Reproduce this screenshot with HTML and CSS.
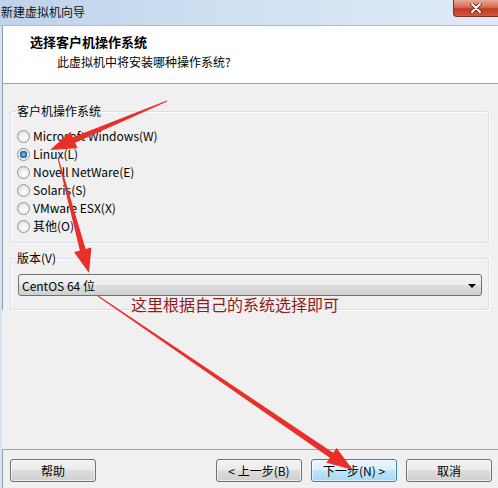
FILE: index.html
```html
<!DOCTYPE html>
<html lang="zh-CN">
<head>
<meta charset="utf-8">
<title>新建虚拟机向导</title>
<link rel="stylesheet" href="styles.css">
</head>
<body>
<div class="window">
  <div class="titlebar">
    <span class="title">新建虚拟机向导</span>
    <span class="close"><svg width="14" height="10" viewBox="0 0 14 10"><path d="M3 1 L11 9 M11 1 L3 9" stroke="#5a1a10" stroke-width="3.4" stroke-linecap="round"/><path d="M3 1 L11 9 M11 1 L3 9" stroke="#ffffff" stroke-width="2" stroke-linecap="round"/></svg></span>
  </div>
  <div class="frame">
    <div class="header">
      <div class="h1">选择客户机操作系统</div>
      <div class="sub">此虚拟机中将安装哪种操作系统?</div>
    </div>
    <div class="content">
      <fieldset class="group g1">
        <legend>客户机操作系统</legend>
        <div class="opt"><span class="radio"></span>Microsoft Windows(W)</div>
        <div class="opt"><span class="radio on"></span>Linux(L)</div>
        <div class="opt"><span class="radio"></span>Novell NetWare(E)</div>
        <div class="opt"><span class="radio"></span>Solaris(S)</div>
        <div class="opt"><span class="radio"></span>VMware ESX(X)</div>
        <div class="opt"><span class="radio"></span>其他(O)</div>
      </fieldset>
      <fieldset class="group g2">
        <legend>版本(V)</legend>
        <div class="combo"><span>CentOS 64 位</span><span class="caret"></span></div>
      </fieldset>
    </div>
    <div class="footer">
      <button class="btn">帮助</button>
      <span class="spacer"></span>
      <button class="btn">&lt; 上一步(B)</button>
      <button class="btn default">下一步(N) &gt;</button>
      <button class="btn">取消</button>
    </div>
  </div>
  <div class="note">这里根据自己的系统选择即可</div>
  <svg class="arrows" width="498" height="488" viewBox="0 0 498 488">
    <polygon points="166.8,100.5 72.8,137.2 70.5,131.7 50,150 77.5,148.3 75.2,142.8 167.2,101.5"/>
    <polygon points="57.5,158.1 79.85,250.61 74.06,252.17 89,273 91.44,247.49 85.65,249.05 58.5,157.9"/>
    <polygon points="97.72,296.41 329.83,457.82 326.45,462.77 353,470 336.59,447.91 333.21,452.86 98.28,295.59"/>
  </svg>
</div>
</body>
</html>
```

FILE: styles.css
```css
* { box-sizing: border-box; }
html, body { margin: 0; padding: 0; }
body {
  width: 498px;
  height: 488px;
  overflow: hidden;
  font-family: "Noto Sans CJK SC", "Microsoft YaHei", sans-serif;
  font-size: 12px;
  color: #000;
}
.window {
  position: relative;
  width: 498px;
  height: 488px;
  display: flex;
  flex-direction: column;
  background: #f0f0f0;
}
.titlebar {
  height: 26px;
  flex: none;
  display: flex;
  align-items: flex-start;
  border-bottom: 1px solid #a8bdd4;
  background: linear-gradient(to right, #bdd3eb 0%, #cfe0f2 45%, #dfeaf6 100%);
}
.title {
  padding: 4px 0 0 1px;
  line-height: 16px;
  color: #111;
}
.close {
  margin-left: auto;
  width: 45px;
  height: 17px;
  display: flex;
  align-items: center;
  justify-content: center;
  border: 1px solid #7c2e22;
  border-top: none;
  border-right: none;
  border-radius: 0 0 0 4px;
  background: linear-gradient(#e9a898 0%, #d86a52 45%, #c13c22 55%, #d0583c 100%);
}
.frame {
  flex: 1;
  display: flex;
  flex-direction: column;
  border-left: 2px solid #d6e3f1;
}
.frame > * { border-left: 1px solid #8b9db4; }
.header {
  height: 58px;
  flex: none;
  background: #fff;
  border-bottom: 1px solid #a0a0a0;
  padding: 7px 0 0 27px;
}
.h1 {
  font-size: 13px;
  font-weight: bold;
  line-height: 18px;
}
.sub {
  margin-top: 3px;
  padding-left: 27px;
  line-height: 16px;
}
.content {
  padding: 0 9px 0 7px;
}
.group {
  margin: 0;
  border: 1px solid #d5dfe5;
  box-shadow: inset 1px 1px 0 #fff, 1px 1px 0 #fff;
  border-radius: 2px;
  min-width: 0;
}
.group legend {
  margin-left: -2px;
  padding: 0 1px;
  line-height: 16px;
}
.g1 {
  margin-top: 19px;
  padding: 8px 6px 7px 7px;
}
.g2 {
  margin-top: 7px;
  padding: 8px 6px 13px 7px;
}
.opt {
  display: flex;
  align-items: center;
  height: 18px;
  line-height: 18px;
}
.radio {
  width: 13px;
  height: 13px;
  margin: 0 3px 0 -1px;
  border-radius: 50%;
  border: 1px solid #939393;
  background: radial-gradient(circle at 60% 65%, #ffffff 0%, #f0f0f0 40%, #d6d6d6 100%);
  flex: none;
}
.radio.on {
  background:
    radial-gradient(circle at 50% 50%, #8fd1f5 0px, #2c8fcf 2px, #185e93 3.5px, transparent 4px),
    radial-gradient(circle at 60% 65%, #ffffff 0%, #f0f0f0 40%, #d6d6d6 100%);
}
.combo {
  height: 22px;
  display: flex;
  align-items: center;
  justify-content: space-between;
  padding: 0 5px 0 3px;
  border: 1px solid #707070;
  border-radius: 3px;
  background: linear-gradient(#f3f3f3 0%, #ececec 50%, #dedede 50%, #d0d0d0 100%);
}
.caret {
  width: 0;
  height: 0;
  border-left: 4px solid transparent;
  border-right: 4px solid transparent;
  border-top: 4px solid #000;
  margin-top: 1px;
}
.footer {
  margin-top: auto;
  height: 39px;
  flex: none;
  display: flex;
  align-items: flex-start;
  gap: 9px;
  padding: 9px 6px 0 7px;
  border-top: 1px solid #a0a0a0;
}
.spacer { flex: 1; }
.btn {
  width: 86px;
  height: 23px;
  padding: 0;
  font-family: inherit;
  font-size: 12px;
  color: #000;
  border: 1px solid #707070;
  border-radius: 3px;
  background: linear-gradient(#f2f2f2 0%, #ebebeb 50%, #dddddd 50%, #cfcfcf 100%);
  box-shadow: inset 0 0 0 1px rgba(255,255,255,0.6);
}
.btn.default {
  border-color: #3c7fb1;
  background: linear-gradient(#eaf6fd 0%, #d9f0fc 50%, #bee6fd 50%, #a7d9f5 100%);
}
.note {
  position: absolute;
  left: 131px;
  top: 294px;
  font-size: 16px;
  line-height: 20px;
  color: #8e1c1c;
}
.arrows {
  position: absolute;
  left: 0;
  top: 0;
  pointer-events: none;
}
.arrows polygon { fill: #e8302a; }
```
